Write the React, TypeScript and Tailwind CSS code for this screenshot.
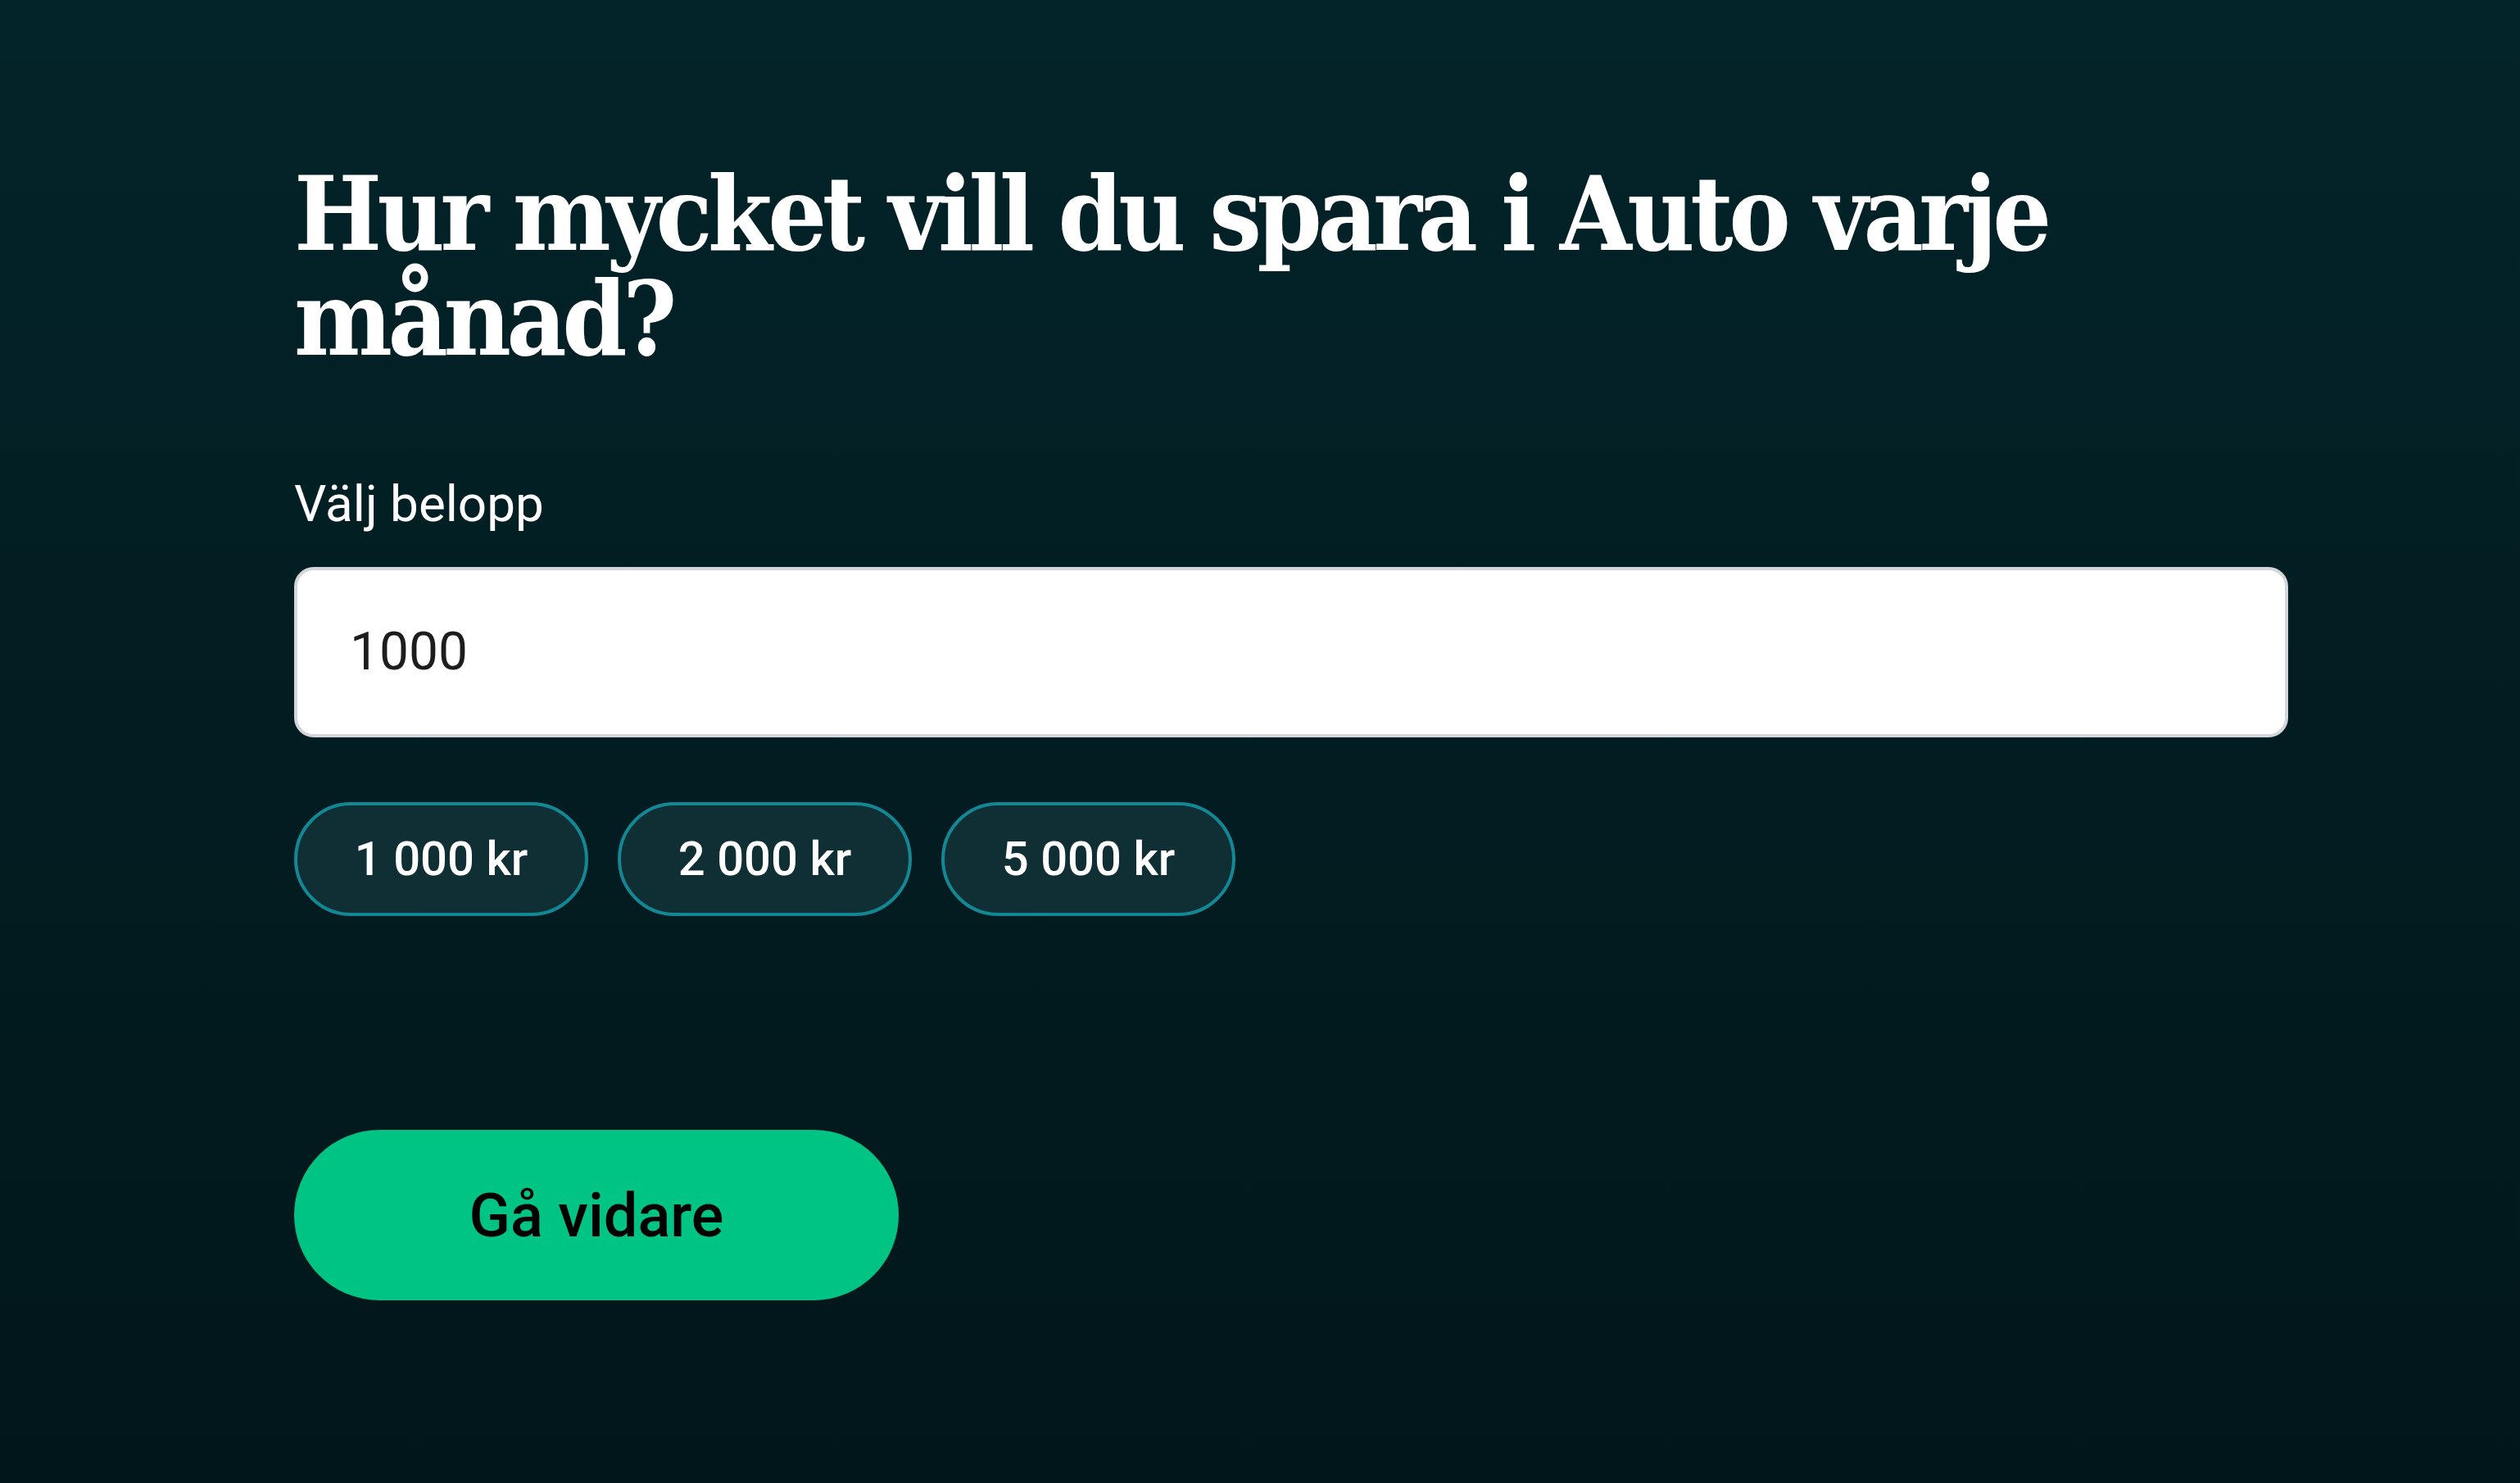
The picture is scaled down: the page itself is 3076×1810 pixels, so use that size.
const amounts = ["1 000 kr", "2 000 kr", "5 000 kr"];

const App = () => {
  return (
    <div className="min-h-screen w-full bg-gradient-to-b from-[#032429] to-[#01161a] font-['Roboto',sans-serif]">
      <div className="pl-[359px] pt-[197px] pb-[200px]">
        <div className="w-[2434px]">
          <h1 className="text-[126px] leading-[128px] font-bold text-white font-['DejaVu_Serif_Condensed','DejaVu_Serif',serif] tracking-[-5.5px]">
            Hur mycket vill du spara i Auto varje månad?
          </h1>

          <label className="block mt-[131px] text-[62px] leading-[62px] text-white">
            Välj belopp
          </label>

          <div className="mt-[46px] h-[208px] rounded-[24px] border-4 border-[#d3d6da] bg-white flex items-center px-[64px]">
            <span className="text-[64px] text-[#1d1d1d]">1000</span>
          </div>

          <div className="mt-[79px] flex gap-[36px]">
            {amounts.map((amount) => (
              <button
                key={amount}
                className="w-[359px] h-[139px] rounded-full border-4 border-[#138895] bg-[#0f2f35] text-white text-[58px] font-medium flex items-center justify-center"
              >
                {amount}
              </button>
            ))}
          </div>

          <button className="mt-[261px] w-[738px] h-[208px] rounded-full bg-[#00c483] text-black text-[74px] font-medium flex items-center justify-center">
            Gå vidare
          </button>
        </div>
      </div>
    </div>
  );
};

export default App;
